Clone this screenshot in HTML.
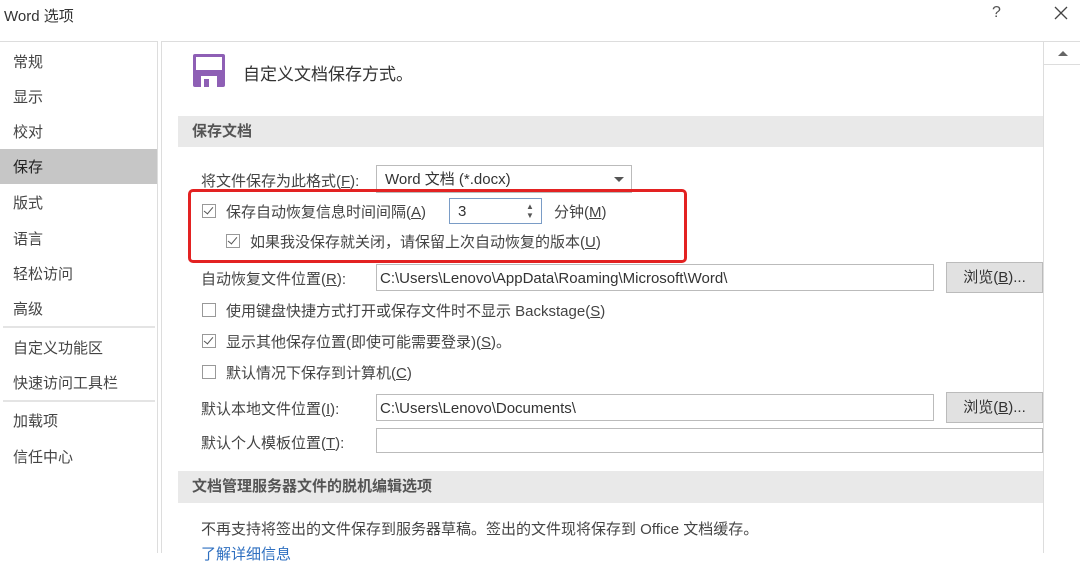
<!DOCTYPE html>
<html><head><meta charset="utf-8"><style>
*{margin:0;padding:0;box-sizing:border-box}
body{width:1080px;height:553px;overflow:hidden;background:#fff;font-family:"Liberation Sans","Noto Sans CJK SC",sans-serif;font-size:15px;color:#444;position:relative}
.a{position:absolute;white-space:nowrap}
.nav{left:13px}
.cb{position:absolute;width:14px;height:14px;border:1px solid #999;background:#fff}
.cb.on::after{content:"";position:absolute;left:3px;top:0px;width:4px;height:8px;border:solid #555;border-width:0 1.5px 1.5px 0;transform:rotate(40deg)}
.inp{position:absolute;border:1px solid #bbb;background:#fff;padding-left:3px;line-height:27px;color:#333}
.btn{position:absolute;border:1px solid #bbb;background:#e1e1e1;text-align:center;line-height:29px;color:#333}
.hdr{position:absolute;left:178px;width:865px;background:#e9e9e9;font-weight:bold;padding-left:12px;color:#555}
u{text-decoration:underline}
</style></head><body>
<div class="a" style="left:4px;top:5px;font-size:15px;color:#333">Word 选项</div>
<div class="a" style="left:992px;top:4px;font-size:16px;color:#555">?</div>
<svg class="a" style="left:1054px;top:6px" width="14" height="14" viewBox="0 0 14 14"><path d="M1 1L13 13M13 1L1 13" stroke="#444" stroke-width="1.3"/></svg>
<div class="a" style="left:0;top:41px;width:158px;height:512px;border-top:1px solid #ddd;border-right:1px solid #ddd"></div>
<div class="a" style="left:161px;top:41px;width:919px;height:512px;border-top:1px solid #ddd;border-left:1px solid #ddd"></div>
<div class="a" style="left:1043px;top:42px;width:37px;height:511px;border-left:1px solid #ddd"></div>
<div class="a" style="left:1044px;top:43px;width:36px;height:22px;border-bottom:1px solid #ddd"></div>
<div class="a" style="left:1058px;top:51px;width:0;height:0;border-left:5px solid transparent;border-right:5px solid transparent;border-bottom:5px solid #666"></div>
<div class="a" style="left:0;top:149px;width:157px;height:35px;background:#c6c6c6"></div>
<div class="a" style="left:3px;top:326px;width:152px;height:2px;background:#e4e4e4"></div>
<div class="a" style="left:3px;top:400px;width:152px;height:2px;background:#e4e4e4"></div>
<div class="a nav" style="top:51px">常规</div>
<div class="a nav" style="top:86px">显示</div>
<div class="a nav" style="top:121px">校对</div>
<div class="a nav" style="top:156px;color:#222">保存</div>
<div class="a nav" style="top:192px">版式</div>
<div class="a nav" style="top:228px">语言</div>
<div class="a nav" style="top:263px">轻松访问</div>
<div class="a nav" style="top:298px">高级</div>
<div class="a nav" style="top:337px">自定义功能区</div>
<div class="a nav" style="top:372px">快速访问工具栏</div>
<div class="a nav" style="top:410px">加载项</div>
<div class="a nav" style="top:446px">信任中心</div>
<svg class="a" style="left:193px;top:54px" width="32" height="33" viewBox="0 0 32 33"><rect x="0" y="0" width="32" height="33" rx="2" fill="#8e5fb5"/><rect x="3" y="3" width="26" height="13" fill="#fff"/><rect x="8" y="22" width="16" height="11" fill="#fff"/><rect x="11" y="25" width="5" height="8" fill="#8e5fb5"/></svg>
<div class="a" style="left:243px;top:60px;font-size:17px;color:#333">自定义文档保存方式。</div>
<div class="hdr" style="top:116px;height:31px;line-height:31px;left:178px;padding-left:14px">保存文档</div>
<div class="a" style="left:201px;top:170px">将文件保存为此格式(<u>F</u>):</div>
<div class="inp" style="left:376px;top:165px;width:256px;height:28px;padding-left:8px">Word 文档 (*.docx)</div>
<div class="a" style="left:614px;top:177px;border-left:5px solid transparent;border-right:5px solid transparent;border-top:5px solid #555"></div>
<div class="cb on" style="left:202px;top:204px"></div>
<div class="a" style="left:226px;top:201px">保存自动恢复信息时间间隔(<u>A</u>)</div>
<div class="inp" style="left:449px;top:198px;width:93px;height:26px;border-color:#7a9cc6;padding-left:8px;line-height:26px">3</div>
<div class="a" style="left:526px;top:202px;font-size:8px;line-height:9px;color:#555">▲<br>▼</div>
<div class="a" style="left:554px;top:201px">分钟(<u>M</u>)</div>
<div class="cb on" style="left:226px;top:234px"></div>
<div class="a" style="left:250px;top:231px">如果我没保存就关闭，请保留上次自动恢复的版本(<u>U</u>)</div>
<div class="a" style="left:188px;top:189px;width:499px;height:74px;border:3px solid #e32222;border-radius:5px"></div>
<div class="a" style="left:201px;top:268px">自动恢复文件位置(<u>R</u>):</div>
<div class="inp" style="left:376px;top:264px;width:558px;height:27px">C:\Users\Lenovo\AppData\Roaming\Microsoft\Word\</div>
<div class="btn" style="left:946px;top:262px;width:97px;height:31px">浏览(<u>B</u>)...</div>
<div class="cb" style="left:202px;top:303px"></div>
<div class="a" style="left:226px;top:300px">使用键盘快捷方式打开或保存文件时不显示 Backstage(<u>S</u>)</div>
<div class="cb on" style="left:202px;top:334px"></div>
<div class="a" style="left:226px;top:331px">显示其他保存位置(即使可能需要登录)(<u>S</u>)。</div>
<div class="cb" style="left:202px;top:365px"></div>
<div class="a" style="left:226px;top:362px">默认情况下保存到计算机(<u>C</u>)</div>
<div class="a" style="left:201px;top:398px">默认本地文件位置(<u>I</u>):</div>
<div class="inp" style="left:376px;top:394px;width:558px;height:27px">C:\Users\Lenovo\Documents\</div>
<div class="btn" style="left:946px;top:392px;width:97px;height:31px">浏览(<u>B</u>)...</div>
<div class="a" style="left:201px;top:432px">默认个人模板位置(<u>T</u>):</div>
<div class="inp" style="left:376px;top:428px;width:667px;height:25px"></div>
<div class="hdr" style="top:471px;height:32px;line-height:32px;left:178px;padding-left:14px">文档管理服务器文件的脱机编辑选项</div>
<div class="a" style="left:201px;top:518px">不再支持将签出的文件保存到服务器草稿。签出的文件现将保存到 Office 文档缓存。</div>
<div class="a" style="left:201px;top:543px;color:#2e6fc0">了解详细信息</div>
</body></html>
